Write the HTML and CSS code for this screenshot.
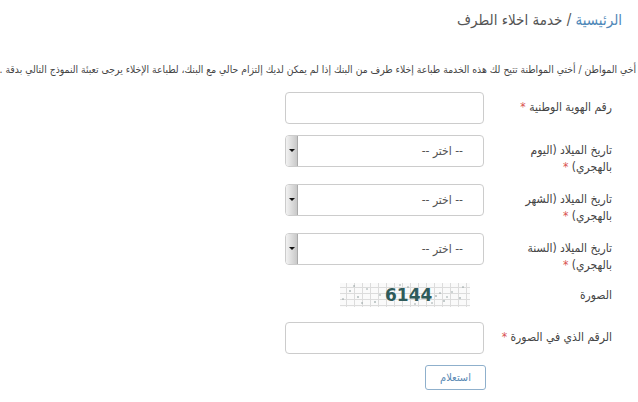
FILE: index.html
```html
<!DOCTYPE html>
<html lang="ar" dir="rtl">
<head>
<meta charset="utf-8">
<link rel="stylesheet" href="styles.css">
</head>
<body>
<div class="crumbs"><a class="home">الرئيسية</a> / <span>خدمة اخلاء الطرف</span></div>
<p class="intro">أخي المواطن / أختي المواطنة تتيح لك هذه الخدمة طباعة إخلاء طرف من البنك إذا لم يمكن لديك إلتزام حالي مع البنك، لطباعة الإخلاء يرجى تعبئة النموذج التالي بدقة .</p>
<form class="form">
  <div class="row">
    <label class="lbl">رقم الهوية الوطنية <b>*</b></label>
    <div class="field"><div class="input"></div></div>
  </div>
  <div class="row">
    <label class="lbl">تاريخ الميلاد (اليوم بالهجري) <b>*</b></label>
    <div class="field"><div class="select"><span class="opt">-- اختر --</span><span class="arrow"></span></div></div>
  </div>
  <div class="row">
    <label class="lbl">تاريخ الميلاد (الشهر بالهجري) <b>*</b></label>
    <div class="field"><div class="select"><span class="opt">-- اختر --</span><span class="arrow"></span></div></div>
  </div>
  <div class="row">
    <label class="lbl">تاريخ الميلاد (السنة بالهجري) <b>*</b></label>
    <div class="field"><div class="select"><span class="opt">-- اختر --</span><span class="arrow"></span></div></div>
  </div>
  <div class="row captcha-row">
    <label class="lbl lbl-c">الصورة</label>
    <div class="field">
      <div class="captcha">
        <svg width="130" height="24" viewBox="0 0 130 24" direction="ltr">
          <rect width="130" height="24" fill="#fafafa"/>
          <g stroke="#dcdcdc" stroke-width="1">
            <path d="M0 4.5H130M0 10.5H130M0 16.5H130M0 22.5H130"/>
            <path d="M6.5 0V24M14.5 0V24M22.5 0V24M30.5 0V24M38.5 0V24M46.5 0V24M54.5 0V24M62.5 0V24M70.5 0V24M78.5 0V24M86.5 0V24M94.5 0V24M102.5 0V24M110.5 0V24M118.5 0V24M126.5 0V24"/>
          </g>
          <g fill="#7d8f8f">
            <circle cx="10" cy="8" r="0.8"/><circle cx="18" cy="14" r="0.8"/><circle cx="27" cy="6" r="0.7"/><circle cx="35" cy="19" r="0.8"/><circle cx="88" cy="7" r="0.8"/><circle cx="96" cy="13" r="0.8"/><circle cx="104" cy="18" r="0.8"/><circle cx="112" cy="9" r="0.7"/><circle cx="120" cy="15" r="0.8"/><circle cx="3" cy="16" r="0.7"/><circle cx="60" cy="2" r="0.7"/><circle cx="75" cy="21" r="0.7"/>
            <circle cx="100" cy="10" r="0.7"/><circle cx="107" cy="14" r="0.7"/><circle cx="92" cy="20" r="0.7"/><circle cx="22" cy="20" r="0.7"/><circle cx="14" cy="3" r="0.7"/><circle cx="123" cy="4" r="0.7"/><circle cx="68" cy="4" r="0.7"/><circle cx="40" cy="12" r="0.7"/>
          </g>
          <text x="45" y="18" text-anchor="start" class="cap-text">6144</text>
        </svg>
      </div>
    </div>
  </div>
  <div class="row">
    <label class="lbl">الرقم الذي في الصورة <b>*</b></label>
    <div class="field"><div class="input"></div></div>
  </div>
  <div class="row btn-row">
    <div class="lbl"></div>
    <div class="field"><button type="button" class="btn">استعلام</button></div>
  </div>
</form>
</body>
</html>
```
FILE: styles.css
```css
html, body {
  margin: 0;
  padding: 0;
  background: #fff;
}
body {
  font-family: "DejaVu Sans Condensed", "DejaVu Sans", sans-serif;
  color: #555;
  width: 638px;
  height: 402px;
  overflow: hidden;
}
.crumbs {
  padding: 10px 16px 0 0;
  font-size: 15px;
  line-height: 20px;
  color: #555;
}
.home {
  color: #4f88b8;
}
.intro {
  margin: 31px 2px 0 0;
  font-size: 10.3px;
  line-height: 16px;
  white-space: nowrap;
  color: #444;
  overflow: hidden;
}
.form {
  margin-top: 15px;
  padding-right: 26px;
}
.row {
  display: flex;
  gap: 16px;
  min-height: 35px;
  margin-bottom: 8px;
}
.captcha-row {
  min-height: 32px;
}
.lbl {
  width: 112px;
  padding-top: 7px;
  font-size: 12px;
  line-height: 17px;
  color: #444;
}
.lbl b {
  color: #d9534f;
  font-weight: normal;
}
.lbl-c {
  padding-top: 5px;
}
.field {
  width: 199px;
}
.input {
  height: 30px;
  border: 1px solid #ccc;
  border-radius: 4px;
  background: #fff;
}
.select {
  height: 30px;
  border: 1px solid #ccc;
  border-radius: 4px;
  background: #fff;
  display: flex;
  align-items: center;
  justify-content: space-between;
  overflow: hidden;
}
.opt {
  padding-right: 20px;
  font-size: 12px;
  color: #555;
}
.arrow {
  width: 11px;
  height: 30px;
  border-right: 1px solid #aaa;
  background: linear-gradient(to left, #c8c8c8, #f2f2f2);
  position: relative;
}
.arrow::after {
  content: "";
  position: absolute;
  left: 3px;
  top: 13px;
  border-left: 3px solid transparent;
  border-right: 3px solid transparent;
  border-top: 3px solid #111;
}
.captcha {
  margin-right: 14px;
  margin-top: 1px;
  width: 130px;
  height: 24px;
}
.captcha svg {
  display: block;
}
.cap-text {
  font-family: "DejaVu Sans", sans-serif;
  font-size: 17px;
  font-weight: bold;
  fill: #2f5b5a;
}
.btn {
  margin-right: -2px;
  height: 25px;
  width: 61px;
  padding: 0;
  border: 1px solid #8fb0cc;
  border-radius: 3px;
  background: #fff;
  color: #5a8ab5;
  font-family: "DejaVu Sans Condensed", "DejaVu Sans", sans-serif;
  font-size: 11px;
}
```
